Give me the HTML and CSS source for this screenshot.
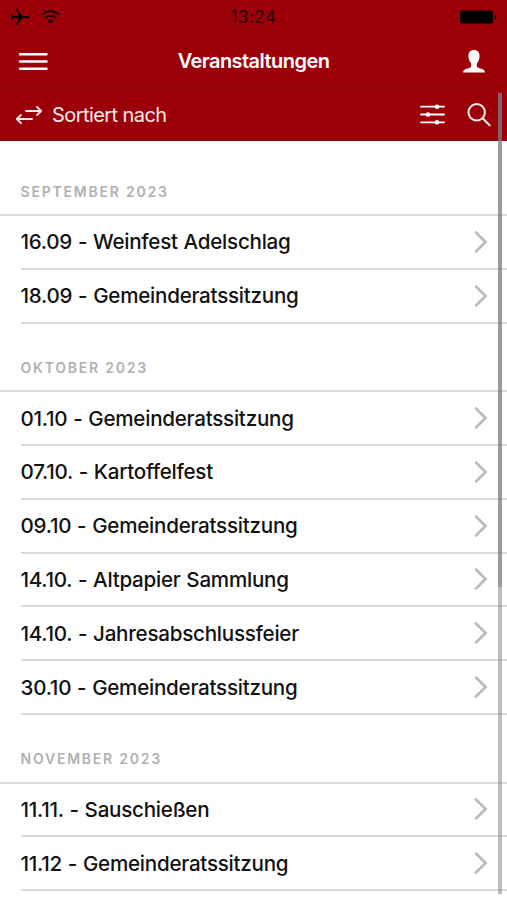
FILE: index.html
```html
<!DOCTYPE html>
<html lang="de">
<head>
    <meta charset="UTF-8" />
    <meta name="viewport" content="width=device-width, initial-scale=1.0"/>
    <title>Veranstaltungen</title>
    <link rel="stylesheet" href="styles.css">
</head>
<body>
    <header>
        <div class="status">
            <div class="status-left">
                <svg class="plane" width="20" height="18" viewBox="0 0 20 18"><path d="M19.500 9c0-.8-1-1.100-2-1.100h-4.900L7.300.9H6l2.400 7H4L2.100 5.900H1L1.700 9 1 12.100h1.100L4 10.100h4.400l-2.400 7h1.300l5.300-7h4.900c1 0 2-.3 2-1.100z"/></svg>
                <svg class="wifi" width="19" height="14" viewBox="0 0 19 14"><path d="M1 4.700C6 .2 13 .2 18 4.700M4.100 7.900c3.300-2.700 7.500-2.700 10.800 0"/><circle cx="9.500" cy="11.300" r="2.200"/></svg>
            </div>
            <div class="time">13:24</div>
            <svg class="battery" width="39" height="14" viewBox="0 0 39 14"><rect x="1" y="0.500" width="33" height="13" rx="2.500"/><path d="M35.500 5c2.600.4 2.600 3.600 0 4z"/></svg>
        </div>
        <nav>
            <svg class="menu" width="30" height="20" viewBox="0 0 30 20"><path d="M2 2.300h26.500M2 9.500h26.500M2 16.700h26.500"/></svg>
            <h1>Veranstaltungen</h1>
            <svg class="user" width="22" height="23" viewBox="0 0 22 23"><path d="M11 0c3.600 0 5.700 2.300 5.500 6 0 3-.8 5.600-2.500 7.200-.6 2.200-.2 4 1.200 4.500 2.500 1 5.500 1.300 6.400 3.200.2.600.3 1.100.3 1.600H.1c0-.5.1-1 .3-1.600.9-1.900 3.900-2.200 6.400-3.200 1.400-.5 1.800-2.300 1.200-4.500C6.300 11.600 5.500 9 5.500 6 5.300 2.300 7.400 0 11 0z"/></svg>
        </nav>
        <div class="sort">
            <svg class="arrows" width="27" height="18" viewBox="0 0 27 18"><path d="M11 5h15M22.100 1l4.100 4-4.100 4M17 13H2M5.900 9l-4.100 4 4.100 4"/></svg>
            <span>Sortiert nach</span>
            <svg class="filter" width="25" height="21" viewBox="0 0 25 21"><path d="M1 2.700h23M1 10.500h23M1 18.300h23"/><circle cx="17" cy="2.700" r="2.300"/><circle cx="8" cy="10.500" r="2.300"/><circle cx="17" cy="18.300" r="2.300"/></svg>
            <svg class="search" width="24" height="24" viewBox="0 0 24 24"><circle cx="9.700" cy="9.300" r="8.200"/><path d="M15.600 15.200l7 7.100"/></svg>
        </div>
    </header>
    <main>
        <h2 class="first">September 2023</h2>
        <ul>
            <li><span>16.09 - Weinfest Adelschlag</span><svg class="chevron" width="14" height="24" viewBox="0 0 14 24"><path d="M2 2.500l9.500 9.500L2 21.500"/></svg></li>
            <li><span>18.09 - Gemeinderatssitzung</span><svg class="chevron" width="14" height="24" viewBox="0 0 14 24"><path d="M2 2.500l9.500 9.500L2 21.500"/></svg></li>
        </ul>
        <h2>Oktober 2023</h2>
        <ul>
            <li><span>01.10 - Gemeinderatssitzung</span><svg class="chevron" width="14" height="24" viewBox="0 0 14 24"><path d="M2 2.500l9.500 9.500L2 21.500"/></svg></li>
            <li><span>07.10. - Kartoffelfest</span><svg class="chevron" width="14" height="24" viewBox="0 0 14 24"><path d="M2 2.500l9.500 9.500L2 21.500"/></svg></li>
            <li><span>09.10 - Gemeinderatssitzung</span><svg class="chevron" width="14" height="24" viewBox="0 0 14 24"><path d="M2 2.500l9.500 9.500L2 21.500"/></svg></li>
            <li><span>14.10. - Altpapier Sammlung</span><svg class="chevron" width="14" height="24" viewBox="0 0 14 24"><path d="M2 2.500l9.500 9.500L2 21.500"/></svg></li>
            <li><span>14.10. - Jahresabschlussfeier</span><svg class="chevron" width="14" height="24" viewBox="0 0 14 24"><path d="M2 2.500l9.500 9.500L2 21.500"/></svg></li>
            <li><span>30.10 - Gemeinderatssitzung</span><svg class="chevron" width="14" height="24" viewBox="0 0 14 24"><path d="M2 2.500l9.500 9.500L2 21.500"/></svg></li>
        </ul>
        <h2>November 2023</h2>
        <ul>
            <li><span>11.11. - Sauschießen</span><svg class="chevron" width="14" height="24" viewBox="0 0 14 24"><path d="M2 2.500l9.500 9.500L2 21.500"/></svg></li>
            <li><span>11.12 - Gemeinderatssitzung</span><svg class="chevron" width="14" height="24" viewBox="0 0 14 24"><path d="M2 2.500l9.500 9.500L2 21.500"/></svg></li>
        </ul>
    </main>
    <div class="scrollbar"><div class="thumb"></div></div>
</body>
</html>
```
FILE: styles.css
```css
* {
    box-sizing: border-box;
}

body {
    margin: 0;
    height: 900px;
    overflow: hidden;
    position: relative;
    background: #fff;
    color: #111;
    font-family: Inter, "Liberation Sans", sans-serif;
}

svg {
    display: block;
    flex: none;
}

header {
    height: 141px;
    background: #9b0009;
    color: #fff;
}

.status {
    height: 34px;
    padding: 0 9px 0 10px;
    display: grid;
    grid-template-columns: 1fr auto 1fr;
    align-items: center;
    color: #2a0003;
}

.status-left {
    display: flex;
    align-items: center;
    gap: 11px;
}

.plane {
    fill: #100001;
}

.wifi {
    fill: #1c0002;
}

.wifi path {
    fill: none;
    stroke: #1c0002;
    stroke-width: 2;
}

.time {
    margin-right: 1px;
    font-size: 17px;
    letter-spacing: 0.5px;
}

.battery {
    justify-self: end;
}

nav {
    height: 53px;
    padding: 2px 22px 0 18px;
    display: grid;
    grid-template-columns: 1fr auto 1fr;
    align-items: center;
    border-bottom: 1px solid #87000a;
}

.menu {
    margin-top: 2px;
    fill: none;
    stroke: #fff;
    stroke-width: 2.4;
    stroke-linecap: round;
}

h1 {
    margin: 0 -2px 0 2px;
    font-size: 20px;
    font-weight: 600;
    letter-spacing: -0.55px;
}

.user {
    fill: #fff;
    justify-self: end;
}

.sort {
    height: 54px;
    padding: 1px 16px 0 15px;
    display: flex;
    align-items: center;
}

.sort span {
    flex: 1;
    margin: 1px 0 0 10px;
    font-size: 20px;
    letter-spacing: -0.57px;
    color: #ffe9e9;
}

.arrows,
.filter,
.search {
    fill: none;
    stroke: #ffe9e9;
    stroke-width: 1.8;
    stroke-linecap: round;
    stroke-linejoin: round;
}

.filter {
    stroke: #fff;
    margin-right: 22px;
}

.filter circle {
    fill: #fff;
    stroke: none;
}

.search {
    stroke-width: 2;
}

h2 {
    margin: 0;
    height: 68.6px;
    padding: 35px 0 0 20.5px;
    border-bottom: 2px solid #dadada;
    font-size: 14px;
    line-height: 18px;
    font-weight: 600;
    letter-spacing: 1.78px;
    text-transform: uppercase;
    color: #b0b0b0;
}

h2.first {
    height: 75px;
    padding-top: 42px;
}

ul {
    list-style: none;
    margin: 0;
    padding: 0 0 0 20.5px;
}

li {
    height: 53.8px;
    padding-right: 19px;
    display: flex;
    align-items: center;
    justify-content: space-between;
    border-bottom: 2px solid #dadada;
    font-size: 20.6px;
    font-weight: 500;
    letter-spacing: -0.25px;
    word-spacing: 0.6px;
}

.chevron {
    fill: none;
    stroke: #bcbcbc;
    stroke-width: 2.8;
    stroke-linecap: round;
}

/* overlay scroll indicator */
.scrollbar {
    position: absolute;
    top: 93px;
    right: 5px;
    width: 4px;
    height: 801px;
    background: rgba(125, 125, 125, 0.5);
}

.thumb {
    height: 494px;
    background: rgba(125, 125, 125, 0.55);
}
```
